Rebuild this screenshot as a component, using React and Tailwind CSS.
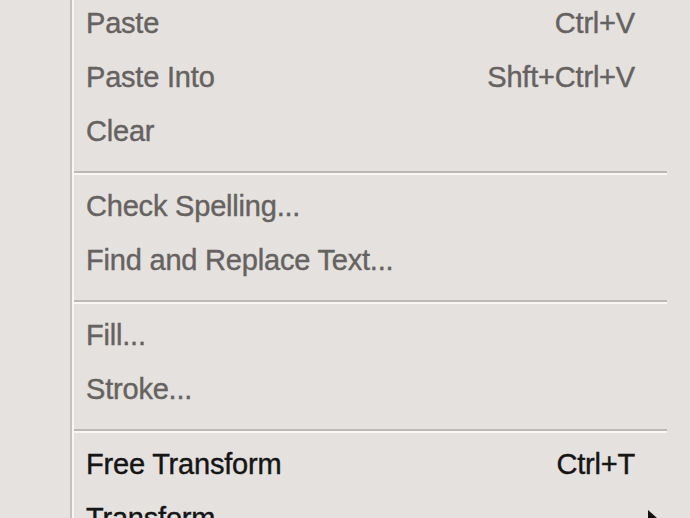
import React from "react";

const items = [
  { label: "Paste", shortcut: "Ctrl+V" },
  { label: "Paste Into", shortcut: "Shft+Ctrl+V" },
  { label: "Clear" },
  { sep: true },
  { label: "Check Spelling..." },
  { label: "Find and Replace Text..." },
  { sep: true },
  { label: "Fill..." },
  { label: "Stroke..." },
  { sep: true },
  { label: "Free Transform", shortcut: "Ctrl+T", enabled: true },
  { label: "Transform", enabled: true, submenu: true },
];

const MenuRow = ({ item }) => (
  <div
    className={
      "flex h-[54px] shrink-0 items-center leading-[54px] " +
      (item.enabled ? "text-[#151515]" : "text-[#66625f]")
    }
  >
    <div className="flex-1 pl-[12px]">{item.label}</div>
    {item.shortcut && <div>{item.shortcut}</div>}
    <div className="flex w-[55px] items-center pl-[13px]">
      {item.submenu && (
        <svg width="9" height="16" viewBox="0 0 9 16">
          <path d="M0 0 L9 8 L0 16 Z" fill="#111" />
        </svg>
      )}
    </div>
  </div>
);

const Separator = () => (
  <div className="flex h-[21px] shrink-0 flex-col pt-[13px] pr-[23px]">
    <div className="h-[2px] bg-[#bcb8b5]" />
    <div className="h-[2px] bg-[#f8f7f6]" />
  </div>
);

const App = () => {
  return (
    <div
      className="flex h-[518px] w-[690px] overflow-hidden bg-[#e4e1de] text-[29px] tracking-[-0.2px] [-webkit-text-stroke:0.4px_currentColor]"
      style={{ fontFamily: '"Liberation Sans", Arial, sans-serif' }}
    >
      <div className="w-[70px] shrink-0 bg-[#e5e2df]" />
      <div className="w-[2px] shrink-0 bg-[#c4c1be]" />
      <div className="w-[2px] shrink-0 bg-[#f8f7f6]" />
      <div className="mt-[-4px] flex flex-1 flex-col">
        {items.map((item, index) =>
          item.sep ? (
            <Separator key={index} />
          ) : (
            <MenuRow key={index} item={item} />
          )
        )}
      </div>
    </div>
  );
};

export default App;
